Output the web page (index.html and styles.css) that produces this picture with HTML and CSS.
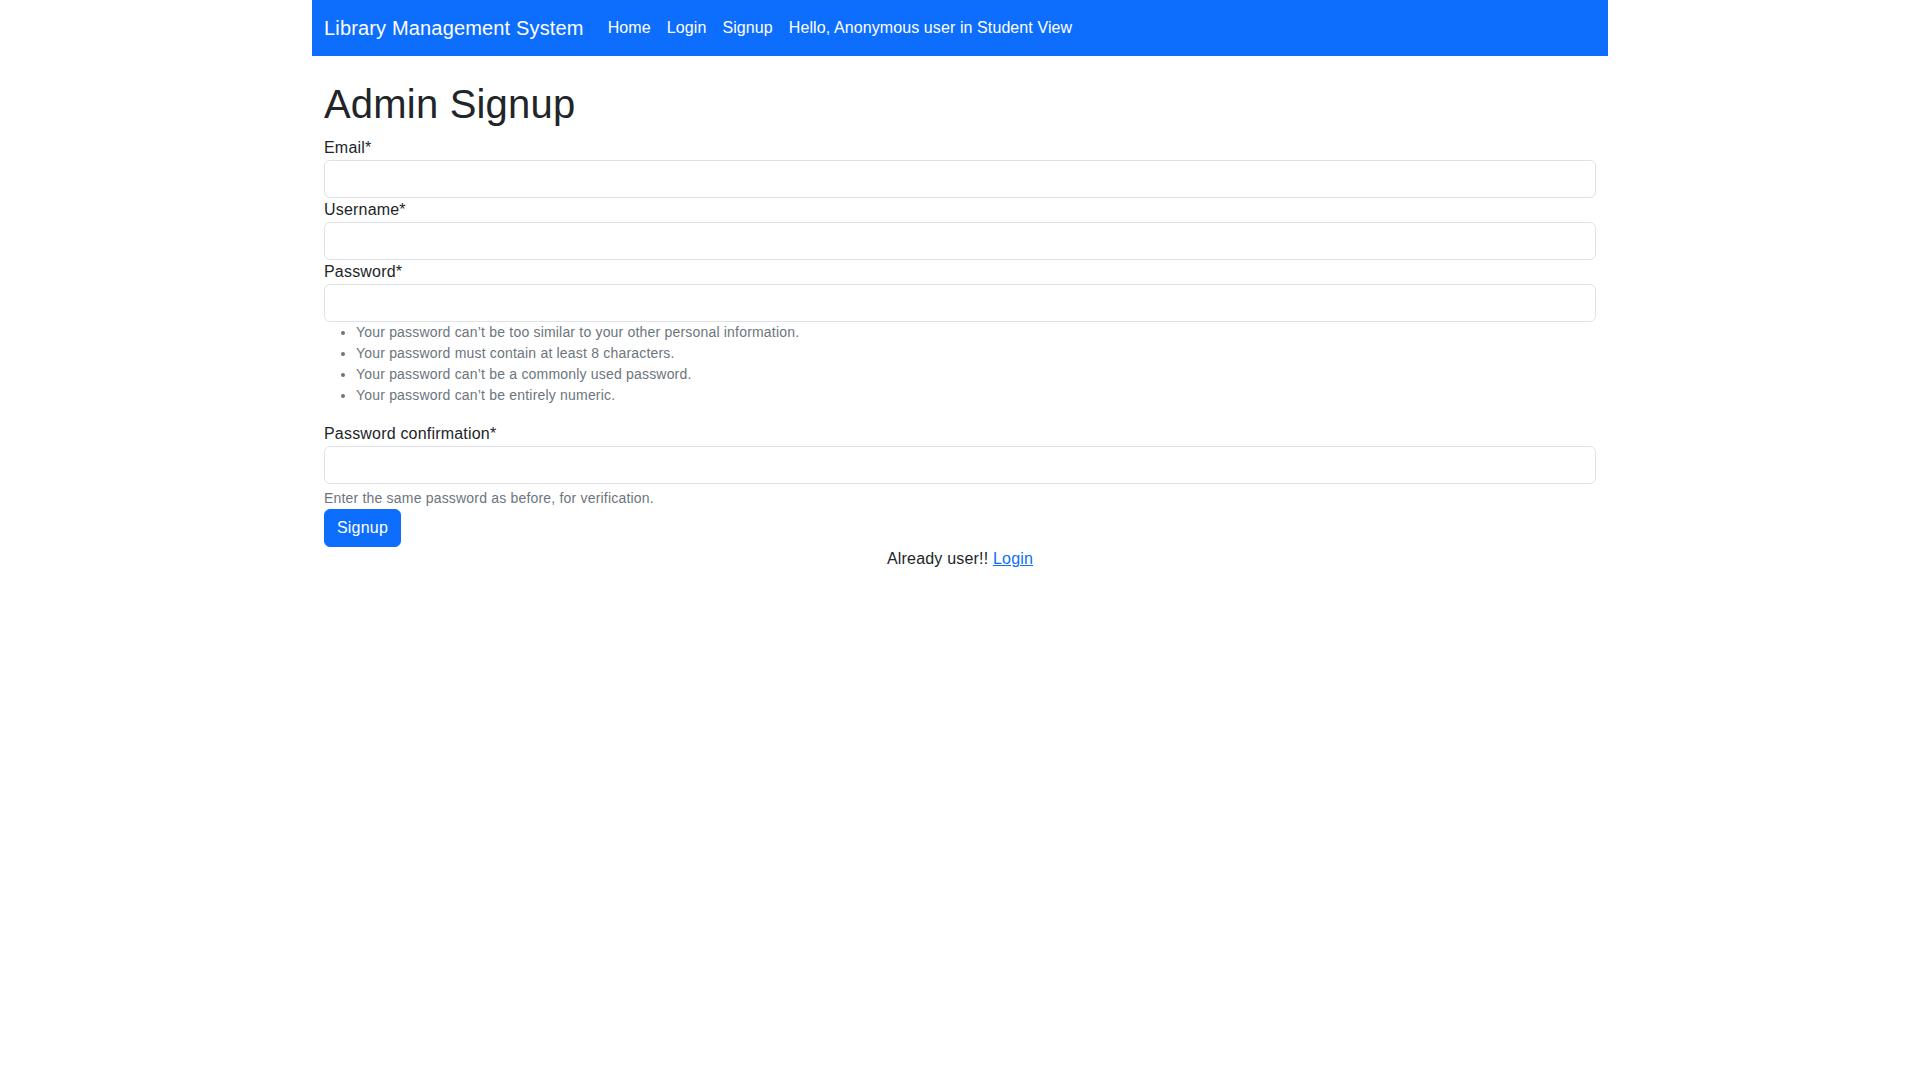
FILE: index.html
```html
<!DOCTYPE html>
<html lang="en">
<head>
<meta charset="utf-8">
<title>Admin Signup</title>
<link rel="stylesheet" href="styles.css">
</head>
<body>
<div class="page">
  <nav class="navbar">
    <a class="brand" href="#">Library Management System</a>
    <ul class="nav">
      <li><a class="nav-link" href="#">Home</a></li>
      <li><a class="nav-link" href="#">Login</a></li>
      <li><a class="nav-link" href="#">Signup</a></li>
      <li><span class="nav-link">Hello, Anonymous user in Student View</span></li>
    </ul>
  </nav>
  <main class="main">
    <h1 class="title">Admin Signup</h1>
    <form class="form">
      <label class="label" for="email">Email*</label>
      <input class="input" id="email" type="email">
      <label class="label" for="username">Username*</label>
      <input class="input" id="username" type="text">
      <label class="label" for="password">Password*</label>
      <input class="input" id="password" type="password">
      <ul class="help-list">
        <li>Your password can’t be too similar to your other personal information.</li>
        <li>Your password must contain at least 8 characters.</li>
        <li>Your password can’t be a commonly used password.</li>
        <li>Your password can’t be entirely numeric.</li>
      </ul>
      <label class="label" for="password2">Password confirmation*</label>
      <input class="input" id="password2" type="password">
      <div class="form-text">Enter the same password as before, for verification.</div>
      <button class="btn" type="button">Signup</button>
    </form>
    <p class="already">Already user!! <a class="link" href="#">Login</a></p>
  </main>
</div>
</body>
</html>
```
FILE: styles.css
```css
html, body {
  margin: 0;
  padding: 0;
  background: #fff;
}
body {
  font-family: "Liberation Sans", Arial, sans-serif;
  font-size: 16px;
  line-height: 1.5;
  color: #212529;
  letter-spacing: 0.012em;
}
.page {
  width: 1296px;
  margin: 0 auto;
}
.navbar {
  display: flex;
  align-items: center;
  height: 56px;
  box-sizing: border-box;
  padding: 8px 12px;
  background: #0d6efd;
}
.brand {
  font-size: 20px;
  line-height: 30px;
  padding: 5px 0;
  margin-right: 16px;
  color: #fff;
  text-decoration: none;
  white-space: nowrap;
  letter-spacing: 0.008em;
}
.nav {
  display: flex;
  list-style: none;
  margin: 0;
  padding: 0;
}
.nav-link {
  display: block;
  padding: 8px 8px;
  color: #fff;
  text-decoration: none;
  white-space: nowrap;
  letter-spacing: 0.006em;
}
.main {
  padding: 0 12px;
}
.title {
  font-size: 40px;
  font-weight: 500;
  line-height: 1.2;
  margin: 24px 0 8px;
}
.form {
  display: flex;
  flex-direction: column;
  align-items: flex-start;
}
.label {
  display: block;
  line-height: 24px;
}
.input {
  display: block;
  width: 100%;
  height: 38px;
  box-sizing: border-box;
  padding: 6px 12px;
  font: inherit;
  border: 1px solid #dee2e6;
  border-radius: 6px;
  background: #fff;
  margin: 0;
}
.help-list {
  margin: 0 0 16px;
  padding-left: 32px;
  font-size: 14px;
  line-height: 21px;
  color: #6c757d;
  align-self: stretch;
}
.form-text {
  margin-top: 4px;
  font-size: 14px;
  line-height: 21px;
  color: #6c757d;
}
.btn {
  height: 38px;
  padding: 6px 12px;
  font: inherit;
  line-height: 24px;
  letter-spacing: inherit;
  color: #fff;
  background: #0d6efd;
  border: 1px solid #0d6efd;
  border-radius: 6px;
  cursor: pointer;
}
.already {
  margin: 0;
  text-align: center;
  line-height: 24px;
}
.link {
  color: #0d6efd;
}
```
